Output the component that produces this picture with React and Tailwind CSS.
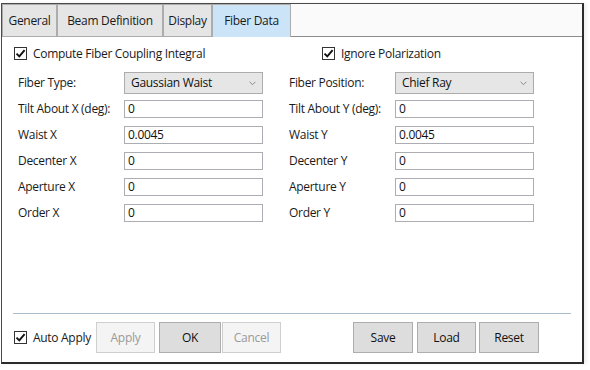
import { useState } from 'react';

const FONT = "font-['Open_Sans','Noto_Sans',sans-serif] tracking-[-0.3px]";

function Check({ checked = true }) {
  return (
    <span className="w-[13px] h-[13px] shrink-0 border border-[#333] bg-white flex items-center justify-center">
      {checked && (
        <svg width="11" height="11" viewBox="0 0 11 11">
          <path d="M1.5 5.6 L4.3 8.4 L9.6 2.2" fill="none" stroke="#111" strokeWidth="1.9" />
        </svg>
      )}
    </span>
  );
}

function Combo({ value }) {
  return (
    <div className="w-[139px] h-[22px] border border-[#acacac] bg-[#e6e6e6] flex items-center justify-between pl-[6px] pr-[6px]">
      <span className="text-[12px] text-[#111]">{value}</span>
      <svg width="7" height="5" viewBox="0 0 7 5">
        <path d="M0.6 0.8 L3.5 3.7 L6.4 0.8" fill="none" stroke="#8a8a8a" strokeWidth="1" />
      </svg>
    </div>
  );
}

function Field({ value }) {
  return (
    <div className="w-[139px] h-[18px] border border-[#abadb3] bg-white flex items-center pl-[3px]">
      <span className="text-[12px] text-[#111] leading-none">{value}</span>
    </div>
  );
}

function Row({ left, right, combo, lv, rv }) {
  return (
    <div className="flex items-center pl-[16px]">
      <span className="w-[106px] text-[12px] text-[#1a1a1a]">{left}</span>
      {combo ? <Combo value={lv} /> : <Field value={lv} />}
      <span className="w-[106px] ml-[26px] text-[12px] text-[#1a1a1a]">{right}</span>
      {combo ? <Combo value={rv} /> : <Field value={rv} />}
    </div>
  );
}

function Btn({ label, w, disabled, className = '' }) {
  return (
    <button
      className={`h-[31px] ${w} ${className} text-[12px] border ${
        disabled ? 'bg-[#f4f4f4] border-[#cfcfcf] text-[#9a9a9a]' : 'bg-[#dddddd] border-[#adadad] text-[#111]'
      }`}
    >
      {label}
    </button>
  );
}

export default function App() {
  const [tab] = useState('Fiber Data');
  const tabs = [
    ['General', 'w-[55px]'],
    ['Beam Definition', 'w-[106px]'],
    ['Display', 'w-[49px]'],
    ['Fiber Data', 'w-[79px]'],
  ];

  return (
    <div className={`w-[590px] h-[370px] bg-white pt-[3px] pl-px ${FONT}`}>
      <div className="w-[583px] h-[361px] flex flex-col border-l border-t border-[#4a4a4a] border-r-2 border-b-2 border-r-[#2b2b2b] border-b-[#2b2b2b] bg-white shadow-[3px_0_3px_rgba(0,0,0,0.06)]">
        {/* Tabs */}
        <div className="flex h-[33px] shrink-0">
          {tabs.map(([t, w]) =>
            t === tab ? (
              <div key={t} className={`${w} h-full border-l border-r border-t border-[#acacac] bg-[#cce4f7] flex items-center justify-center text-[12px] text-[#1a1a1a]`}>
                {t}
              </div>
            ) : (
              <div key={t} className={`${w} h-full border border-[#acacac] bg-[#e5e5e5] flex items-center justify-center text-[12px] text-[#1a1a1a]`}>
                {t}
              </div>
            )
          )}
          <div className="flex-1 h-full bg-[#fafafa] border-b border-[#8c8c8c]" />
        </div>

        {/* Options */}
        <div className="flex items-center pl-[12px] mt-[10px] h-[13px]">
          <div className="w-[308px] flex items-center gap-[6px]">
            <Check />
            <span className="text-[12px] text-[#1a1a1a]">Compute Fiber Coupling Integral</span>
          </div>
          <div className="flex items-center gap-[6px]">
            <Check />
            <span className="text-[12px] text-[#1a1a1a]">Ignore Polarization</span>
          </div>
        </div>

        <div className="flex flex-col mt-[12px]">
          <Row combo left="Fiber Type:" right="Fiber Position:" lv="Gaussian Waist" rv="Chief Ray" />
          <div className="flex flex-col gap-[8px] mt-[6px]">
            <Row left="Tilt About X (deg):" right="Tilt About Y (deg):" lv="0" rv="0" />
            <Row left="Waist X" right="Waist Y" lv="0.0045" rv="0.0045" />
            <Row left="Decenter X" right="Decenter Y" lv="0" rv="0" />
            <Row left="Aperture X" right="Aperture Y" lv="0" rv="0" />
            <Row left="Order X" right="Order Y" lv="0" rv="0" />
          </div>
        </div>

        {/* Footer */}
        <div className="mt-auto pb-[9px]">
          <div className="ml-[11px] w-[558px] h-px bg-[#a9bccb]" />
          <div className="flex items-center mt-[8px] pl-[12px]">
            <div className="w-[82px] flex items-center gap-[6px]">
              <Check />
              <span className="text-[12px] text-[#1a1a1a]">Auto Apply</span>
            </div>
            <Btn label="Apply" w="w-[59px]" disabled />
            <Btn label="OK" w="w-[62px]" className="ml-[4px] border-[#8f8f8f]" />
            <Btn label="Cancel" w="w-[59px]" className="ml-[1px]" disabled />
            <Btn label="Save" w="w-[60px]" className="ml-[72px]" />
            <Btn label="Load" w="w-[59px]" className="ml-[4px]" />
            <Btn label="Reset" w="w-[60px]" className="ml-[3px]" />
          </div>
        </div>
      </div>
    </div>
  );
}
